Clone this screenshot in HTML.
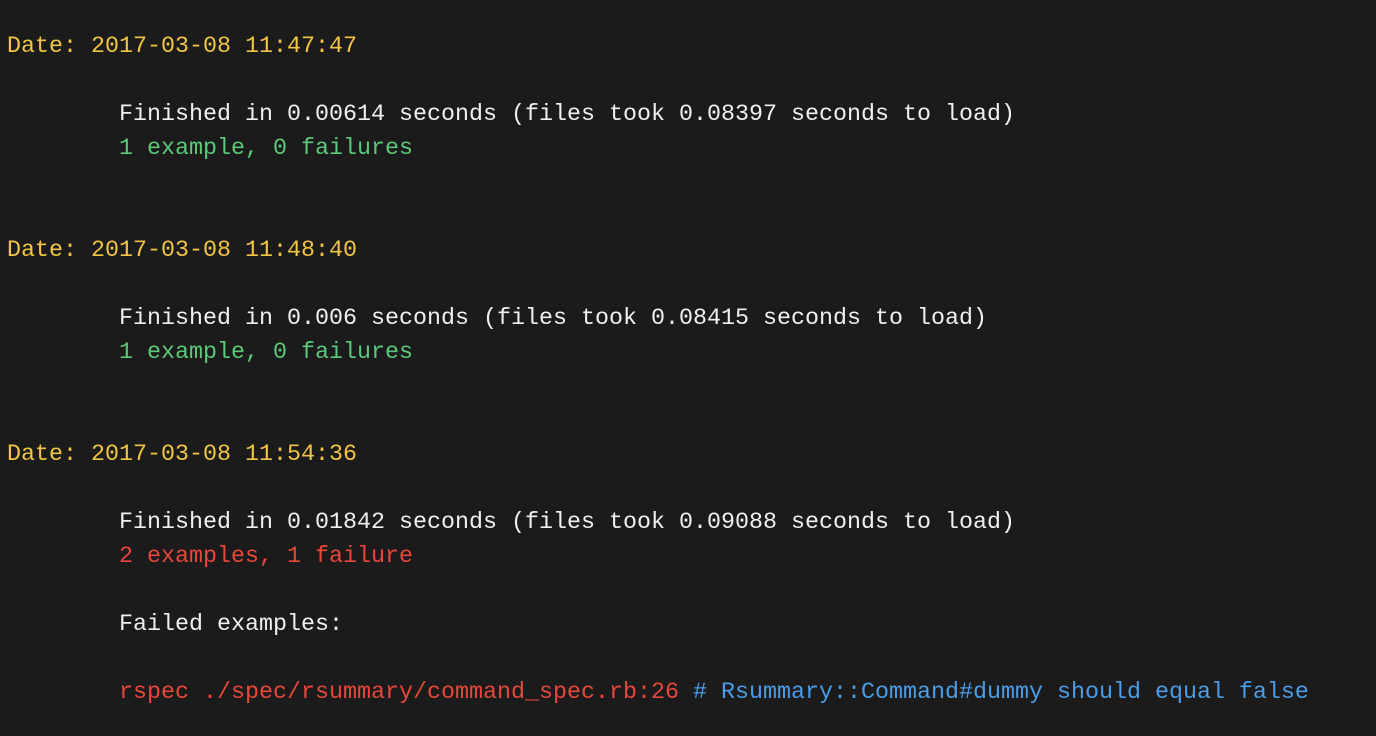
<!DOCTYPE html>
<html><head><meta charset="utf-8"><style>
html,body{margin:0;padding:0;background:#1b1b1b;width:1376px;height:736px;overflow:hidden}
pre{margin:0;position:absolute;left:7px;top:30px;font-family:"Liberation Mono",monospace;font-size:23.33px;line-height:34px;color:#f0f0f0}
.y{color:#f2c544}.g{color:#5cc97a}.r{color:#e8473a}.b{color:#4a9de6}
</style></head><body><pre><span class="y">Date: 2017-03-08 11:47:47</span>

        Finished in 0.00614 seconds (files took 0.08397 seconds to load)
        <span class="g">1 example, 0 failures</span>


<span class="y">Date: 2017-03-08 11:48:40</span>

        Finished in 0.006 seconds (files took 0.08415 seconds to load)
        <span class="g">1 example, 0 failures</span>


<span class="y">Date: 2017-03-08 11:54:36</span>

        Finished in 0.01842 seconds (files took 0.09088 seconds to load)
        <span class="r">2 examples, 1 failure</span>

        Failed examples:

        <span class="r">rspec ./spec/rsummary/command_spec.rb:26</span> <span class="b"># Rsummary::Command#dummy should equal false</span>
</pre></body></html>
